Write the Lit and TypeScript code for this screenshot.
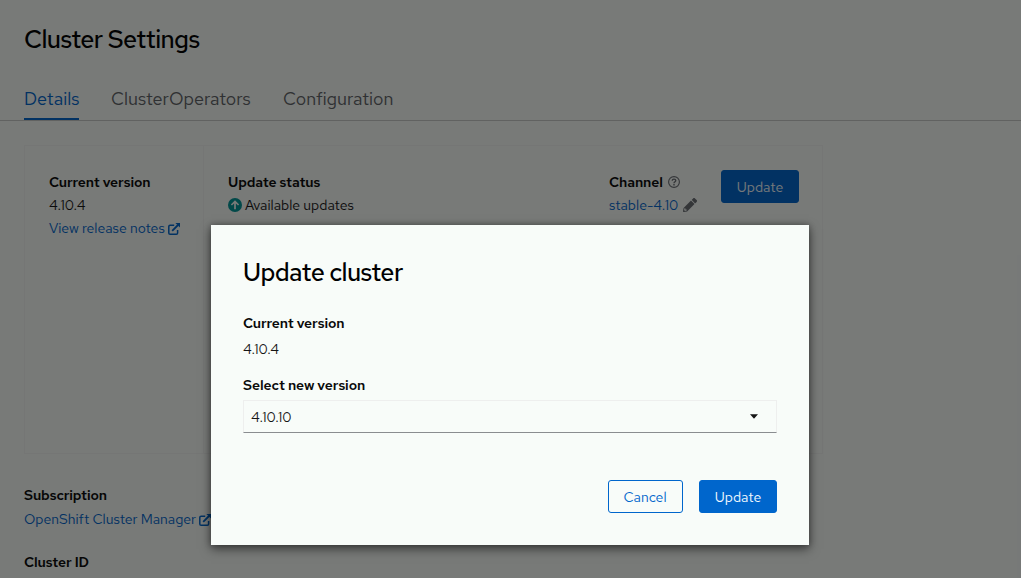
import { LitElement, html, css, svg } from "lit";
import { customElement } from "lit/decorators.js";

const externalIcon = svg`<svg class="ext" viewBox="0 0 12 12" fill="none" stroke="currentColor"><path d="M6.2 2.2H2.1Q.8 2.2.8 3.5V9.9Q.8 11.2 2.1 11.2H8.3Q9.6 11.2 9.6 9.9V7" stroke-width="1.5"/><path d="M4.2 7.8 10 2" stroke-width="1.8"/><path d="M7.4 0H12V4.6Z" fill="currentColor" stroke="none"/></svg>`;

@customElement("app-root")
export class AppRoot extends LitElement {
  static styles = css`
    :host {
      display: block;
      position: relative;
      width: 1021px;
      height: 578px;
      overflow: hidden;
      background: #f8fcf9;
      color: #151515;
      font: 14px/23px "Red Hat Text", Inter, sans-serif;
    }
    * { box-sizing: border-box; }
    h1, h2 { margin: 0; font-weight: 500; font-size: 25px; line-height: 31px; height: 32px; letter-spacing: -0.62px; color: #000; white-space: nowrap; }
    h1 { height: 56px; padding: 24px 0 0 24px; }
    .tabs {
      display: flex;
      gap: 32px;
      height: 65px;
      padding: 19px 24px 0;
      border-bottom: 1px solid #c8cbc8;
      font-size: 18px;
      line-height: 48px;
      color: #5f6367;
    }
    .tab { height: 45px; white-space: nowrap; }
    .tab1 { width: 55px; color: #0066cc; border-bottom: 2px solid #0066cc; }
    .tab2 { width: 140px; }
    .card {
      display: flex;
      margin: 24px 0 0 24px;
      width: 799px;
      height: 309px;
      border: 1px solid #f3f4f3;
    }
    .current { width: 179px; padding: 25px 24px; border-right: 1px solid #f3f4f3; }
    .status { flex: 1; padding: 25px 0 0 24px; }
    .channel { width: 112px; padding-top: 25px; }
    .b { font-weight: 600; letter-spacing: -0.1px; color: #0a0a0a; }
    .row { display: flex; align-items: center; height: 23px; white-space: nowrap; }
    .link { color: #0066cc; }
    .ext { width: 12px; height: 12px; margin-left: 3px; flex: none; }
    .up { width: 14px; height: 14px; margin-right: 3px; margin-top: -1px; flex: none; }
    .help { width: 12px; height: 12px; margin-left: 5px; margin-top: -1px; }
    .pencil { width: 14px; height: 14px; margin-left: 5px; margin-top: -1px; }
    .btn {
      display: block;
      width: 78px;
      height: 33px;
      padding: 0;
      border: 1px solid #0066cc;
      border-radius: 3px;
      background: #0066cc;
      color: #f4faff;
      font: inherit;
      line-height: 32px;
      text-align: center;
    }
    .cardbtn { margin: 24px 23px 0 0; }
    .sub { padding: 30px 24px 0; }
    .sub .ocm { margin-top: 1px; }
    .sub .id { margin-top: 20px; }
    .backdrop { position: absolute; inset: 0; background: rgba(3, 3, 3, 0.525); }
    .modal {
      position: absolute;
      left: 211px;
      top: 225px;
      width: 598px;
      height: 320px;
      padding: 32px;
      background: #f8fcf9;
      box-shadow: 0 4px 10px rgba(3, 3, 3, 0.5), 0 0 6px rgba(3, 3, 3, 0.3);
    }
    .modal .cv { margin-top: 23px; }
    .modal .val { margin-top: 3px; letter-spacing: -0.1px; }
    .modal .sv { margin-top: 13px; }
    .select {
      display: flex;
      align-items: center;
      justify-content: space-between;
      height: 33px;
      margin-top: 3px;
      padding: 1px 18px 0 7px;
      border: 1px solid #eeefee;
      border-bottom-color: #8a8d90;
      letter-spacing: -0.1px;
    }
    .caret { width: 8px; height: 5px; margin-top: -2px; }
    .actions { display: flex; justify-content: flex-end; gap: 16px; margin-top: 47px; }
    .cancel { width: 75px; padding-right: 1px; background: transparent; color: #0066cc; }
  `;

  render() {
    return html`
      <h1>Cluster Settings</h1>
      <nav class="tabs">
        <div class="tab tab1">Details</div>
        <div class="tab tab2">ClusterOperators</div>
        <div class="tab">Configuration</div>
      </nav>
      <section class="card">
        <div class="current">
          <div class="row b">Current version</div>
          <div class="row">4.10.4</div>
          <div class="row link">View release notes${externalIcon}</div>
        </div>
        <div class="status">
          <div class="row b">Update status</div>
          <div class="row">
            <svg class="up" viewBox="0 0 14 14"><circle cx="7" cy="7" r="7" fill="#009596"/><path d="M7 11.2V3.5M3.4 7 7 3.4 10.6 7" fill="none" stroke="#f8fcf9" stroke-width="1.7"/></svg>
            <span>Available updates</span>
          </div>
        </div>
        <div class="channel">
          <div class="row b"><span>Channel</span>
            <svg class="help" viewBox="0 0 12 12" fill="none" stroke="#6a6e73"><circle cx="6" cy="6" r="5.4" stroke-width="1.1"/><path d="M4.2 4.7Q4.3 3.1 6 3.1T7.8 4.6Q7.8 5.4 6.9 5.8T6 7.2" stroke-width="1.3"/><path d="M6 8v1.4" stroke-width="1.4"/></svg>
          </div>
          <div class="row link"><span>stable-4.10</span>
            <svg class="pencil" viewBox="0 0 512 512" fill="#6a6e73"><path d="M498 142l-46 46c-5 5-12 5-17 0L324 77c-5-5-5-12 0-17l46-46c19-19 49-19 68 0l60 60c19 19 19 49 0 68zM284 100 22 362 0 484c-3 16 12 30 28 28l122-22 262-262c5-5 5-12 0-17L301 100c-5-5-12-5-17 0zM88 424h48v36l-65 12-31-31 12-65h36v48z"/></svg>
          </div>
        </div>
        <button class="btn cardbtn">Update</button>
      </section>
      <section class="sub">
        <div class="row b">Subscription</div>
        <div class="row link ocm">OpenShift Cluster Manager${externalIcon}</div>
        <div class="row b id">Cluster ID</div>
      </section>
      <div class="backdrop"></div>
      <div class="modal" role="dialog">
        <h2>Update cluster</h2>
        <div class="row b cv">Current version</div>
        <div class="row val">4.10.4</div>
        <div class="row b sv">Select new version</div>
        <div class="select"><span>4.10.10</span><svg class="caret" viewBox="0 0 9 5"><path d="M0 0H9L5 4.6Q4.5 5 4 4.6Z" fill="#151515"/></svg></div>
        <div class="actions">
          <button class="btn cancel">Cancel</button>
          <button class="btn">Update</button>
        </div>
      </div>
    `;
  }
}
